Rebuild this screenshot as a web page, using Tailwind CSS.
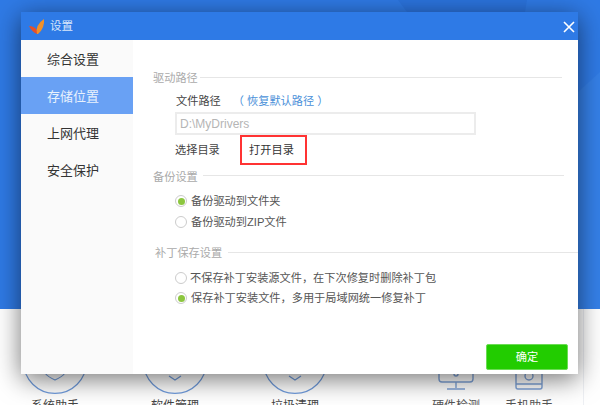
<!DOCTYPE html>
<html>
<head>
    <title>设置</title>
    <script src="https://cdn.jsdelivr.net/npm/@tailwindcss/browser@4"></script>
</head>
<body class="overflow-hidden bg-white font-['Liberation_Sans','Noto_Sans_CJK_SC',sans-serif]">
<div class="relative w-[600px] h-[405px] overflow-hidden">
    <!-- main window behind the dialog -->
    <div class="h-[309px] bg-[#2f7ae5] overflow-hidden">
        <svg width="600" height="309" viewBox="0 0 600 309">
            <path d="M398 0H527L525 12H407Z" fill="#2b73dd"/>
            <path d="M578 92L600 72V309H578Z" fill="#3580e8"/>
        </svg>
    </div>
    <div class="h-[96px] bg-white flex text-[12px] text-[#444] pt-[21px]">
        <div class="w-[120px] ml-[-5px] flex flex-col items-center">
            <svg width="64" height="64" viewBox="0 0 64 64" fill="none" stroke="#6f9bdc" stroke-width="1.2" class="shrink-0">
                <circle cx="32" cy="32" r="31.4"/>
                <path d="M22 43q3 4 10 7q7-3 10-7"/>
            </svg>
            <span class="mt-[5px] leading-[14px] whitespace-nowrap">系统助手</span>
        </div>
        <div class="w-[120px] flex flex-col items-center">
            <svg width="64" height="64" viewBox="0 0 64 64" fill="none" stroke="#6f9bdc" stroke-width="1.2" class="shrink-0">
                <circle cx="32" cy="32" r="31.4"/>
                <path d="M26 46l6 4l6-4"/>
            </svg>
            <span class="mt-[5px] leading-[14px] whitespace-nowrap">软件管理</span>
        </div>
        <div class="w-[120px] flex flex-col items-center">
            <svg width="64" height="64" viewBox="0 0 64 64" fill="none" stroke="#6f9bdc" stroke-width="1.2" class="shrink-0">
                <circle cx="32" cy="32" r="31.4"/>
                <path d="M26 46l6 4l6-4"/>
            </svg>
            <span class="mt-[5px] leading-[14px] whitespace-nowrap">垃圾清理</span>
        </div>
    </div>
    <div class="absolute left-[433px] top-[366px] flex flex-col items-center w-[46px] text-[12px] text-[#555]">
        <svg width="36" height="24" viewBox="0 0 36 24" fill="none" stroke="#7fa3d8" stroke-width="1.4" class="shrink-0">
            <path d="M1 0v13q0 3 3 3h28q3 0 3-3V0M18 16v6M9 23h18"/>
            <circle cx="18" cy="8" r="2"/>
        </svg>
        <span class="mt-[9px] leading-[14px] whitespace-nowrap">硬件检测</span>
    </div>
    <div class="absolute left-[507px] top-[366px] flex flex-col items-center w-[44px] text-[12px] text-[#555]">
        <svg width="28" height="24" viewBox="0 0 28 24" fill="none" stroke="#7fa3d8" stroke-width="1.4" class="shrink-0">
            <path d="M1 0v21q0 2 2 2h22q2 0 2-2V0M1 18h26"/>
            <circle cx="14" cy="10" r="4"/>
        </svg>
        <span class="mt-[9px] leading-[14px] whitespace-nowrap">手机助手</span>
    </div>
    <div class="absolute left-[583px] top-[309px] w-px h-[96px] bg-[#eef0f4]"></div>

    <!-- settings dialog -->
    <div class="absolute left-[21px] top-[12px] w-[557px] h-[362px] flex flex-col bg-white shadow-[0_5px_24px_rgba(0,0,0,0.55)]">
        <div class="h-[28px] bg-[#2e7ae6] flex items-center pl-[8px] pr-[4px] shrink-0">
            <svg width="16" height="16" viewBox="0 0 16 16" class="mt-[2px]">
                <path d="M0 7 Q5 7 8 11 L8 15 Q3 13 0 7Z" fill="#e4502a"/>
                <path d="M8 15 Q6 6 15 0 Q16 9 9 15Z" fill="#f0902a"/>
            </svg>
            <span class="ml-[5px] text-[11.5px] text-[#d9e8fb] leading-none mt-[2px]">设置</span>
            <svg width="12" height="12" viewBox="0 0 12 12" class="ml-auto mt-[2px] mr-[-1px]" stroke="white" stroke-width="1.6">
                <path d="M1 1l10 10M11 1L1 11"/>
            </svg>
        </div>
        <div class="flex flex-1 min-h-0">
            <div class="w-[112px] bg-[#fafafa] text-[13px] text-[#333] shrink-0">
                <div class="h-[37px] pl-[26px] pt-[3px] flex items-center">综合设置</div>
                <div class="h-[37px] pl-[26px] pt-[3px] flex items-center bg-[#69a1f4] text-[#e8f1fd]">存储位置</div>
                <div class="h-[37px] pl-[26px] pt-[3px] flex items-center">上网代理</div>
                <div class="h-[37px] pl-[26px] pt-[3px] flex items-center">安全保护</div>
            </div>
            <div class="flex-1 flex flex-col text-[11.2px] text-[#555] pt-[30px] pb-[4px] min-w-0">
                <div class="h-4 pl-[20px] flex items-center text-[#aaa]">
                    <span>驱动路径</span>
                    <div class="ml-[2px] w-[362px] h-px bg-[#e6e6e6] mt-[-2px]"></div>
                </div>
                <div class="pl-[43px] mt-[5px] h-5 flex items-center text-[#444]">
                    <span>文件路径</span>
                    <span class="ml-[12px] text-[#4a90d9]">（ 恢复默认路径 ）</span>
                </div>
                <div class="ml-[42px] mt-px w-[301px] h-[23px] border-2 border-[#ececec] flex items-center pl-[3px] text-[12px] text-[#b5b5b5]">D:\MyDrivers</div>
                <div class="pl-[42px] flex items-center h-[30px] text-[#444]">
                    <span class="w-[65px]">选择目录</span>
                    <span class="w-[67px] h-[30px] border-2 border-[#f33] flex items-center justify-center pr-[4px] text-[#333]">打开目录</span>
                </div>
                <div class="mt-1 h-4 pl-[20px] flex items-center text-[#aaa]">
                    <span>备份设置</span>
                    <div class="ml-[5px] w-[361px] h-px bg-[#e6e6e6] mt-[-4px]"></div>
                </div>
                <div class="mt-1.5 h-5 pl-[42px] flex items-center">
                    <span class="w-3 h-3 rounded-full border border-[#ccc] flex items-center justify-center">
                        <span class="w-[7px] h-[7px] rounded-full bg-[#8cc63f]"></span>
                    </span>
                    <span class="ml-[4px]">备份驱动到文件夹</span>
                </div>
                <div class="mt-px h-5 pl-[42px] flex items-center">
                    <span class="w-3 h-3 rounded-full border border-[#ccc]"></span>
                    <span class="ml-[4px]">备份驱动到ZIP文件</span>
                </div>
                <div class="mt-[13px] h-4 pl-[22px] flex items-center text-[#aaa]">
                    <span class="whitespace-nowrap">补丁保存设置</span>
                    <div class="ml-[6px] flex-1 h-px bg-[#e6e6e6] mt-[-2px]"></div>
                </div>
                <div class="mt-[7px] h-5 pl-[42px] flex items-center">
                    <span class="w-3 h-3 rounded-full border border-[#ccc] shrink-0"></span>
                    <span class="ml-[3px] whitespace-nowrap">不保存补丁安装源文件，在下次修复时删除补丁包</span>
                </div>
                <div class="h-5 pl-[42px] flex items-center">
                    <span class="w-3 h-3 rounded-full border border-[#ccc] flex items-center justify-center shrink-0">
                        <span class="w-[7px] h-[7px] rounded-full bg-[#8cc63f]"></span>
                    </span>
                    <span class="ml-[4px] whitespace-nowrap">保存补丁安装文件，多用于局域网统一修复补丁</span>
                </div>
                <button class="mt-auto self-end mr-[10px] w-[82px] h-[26px] bg-[#22cc00] border border-[#6cdc55] rounded-[2px] text-white text-[11.2px]">确定</button>
            </div>
        </div>
    </div>
</div>
</body>
</html>
